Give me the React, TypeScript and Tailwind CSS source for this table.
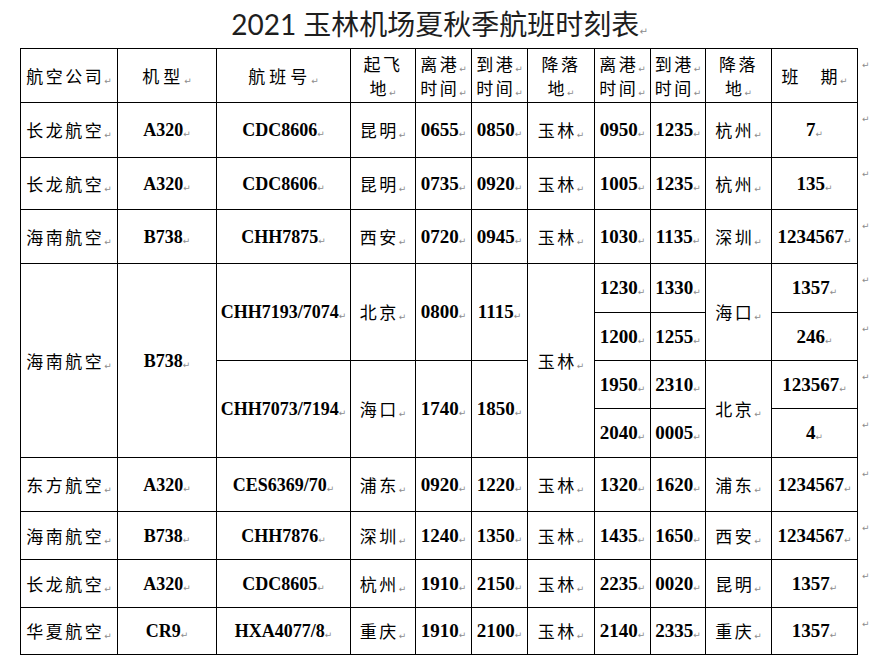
const ZH = "font-['Noto_Sans_CJK_SC',sans-serif] text-[17px] tracking-[2.5px] font-normal"
const NUM = "font-['Liberation_Serif','Noto_Sans_CJK_SC',serif] text-[18px] font-bold"
const DIGITS = "font-['Liberation_Serif','Noto_Sans_CJK_SC',serif] text-[19px] font-bold"

const zhCols = [0, 3, 6, 9]

const topRows = [
  ['长龙航空', 'A320', 'CDC8606', '昆明', '0655', '0850', '玉林', '0950', '1235', '杭州', '7'],
  ['长龙航空', 'A320', 'CDC8606', '昆明', '0735', '0920', '玉林', '1005', '1235', '杭州', '135'],
  ['海南航空', 'B738', 'CHH7875', '西安', '0720', '0945', '玉林', '1030', '1135', '深圳', '1234567'],
]
const topHeights = ['h-[55px]', 'h-[52px]', 'h-[54px]']

const bottomRows = [
  ['东方航空', 'A320', 'CES6369/70', '浦东', '0920', '1220', '玉林', '1320', '1620', '浦东', '1234567'],
  ['海南航空', 'B738', 'CHH7876', '深圳', '1240', '1350', '玉林', '1435', '1650', '西安', '1234567'],
  ['长龙航空', 'A320', 'CDC8605', '杭州', '1910', '2150', '玉林', '2235', '0020', '昆明', '1357'],
  ['华夏航空', 'CR9', 'HXA4077/8', '重庆', '1910', '2100', '玉林', '2140', '2335', '重庆', '1357'],
]
const bottomHeights = ['h-[54px]', 'h-[48px]', 'h-[48px]', 'h-[47px]']

const widths = [97, 99, 134, 65, 56, 56, 67, 56, 55, 66, 86, 22]

function Mark() {
  return (
    <span className="font-['DejaVu_Sans',sans-serif] text-[9px] leading-none font-normal tracking-normal text-[#8c8c8c] align-[-1px]">
      ↵
    </span>
  )
}

function Cell({ v, zh, rowSpan, extra = '' }: { v: string; zh?: boolean; rowSpan?: number; extra?: string }) {
  const font = zh ? ZH : /^\d+$/.test(v) ? DIGITS : NUM
  return (
    <td
      rowSpan={rowSpan}
      className={`border border-black p-0 text-center align-middle whitespace-nowrap leading-[20px] ${font} ${extra}`}
    >
      {v}
      <Mark />
    </td>
  )
}

function EndMark() {
  return (
    <td className="border-0 p-0 pl-[4px] pt-[6px] align-top text-left leading-[12px]">
      <Mark />
    </td>
  )
}

function Head2({ a, b, markA }: { a: string; b: string; markA?: boolean }) {
  return (
    <td className={`border border-black p-0 text-center align-middle ${ZH}`}>
      <div className="h-[25px] leading-[25px]">
        {a}
        {markA && <Mark />}
      </div>
      <div className="h-[24px] leading-[24px]">
        {b}
        <Mark />
      </div>
    </td>
  )
}

function Row({ r }: { r: string[] }) {
  return (
    <>
      {r.map((v, i) => (
        <Cell key={i} v={v} zh={zhCols.includes(i)} />
      ))}
    </>
  )
}

export default function App() {
  return (
    <div className="w-[879px] h-[667px] bg-white text-black overflow-hidden">
      <div className="h-[48px] flex items-center justify-center">
        <h1 className="font-['Lato','Noto_Sans_CJK_SC',sans-serif] text-[28px] font-normal text-[#1e1e1e] leading-none">
          2021 玉林机场夏秋季航班时刻表
          <span className="font-['DejaVu_Sans',sans-serif] text-[10px] text-[#8c8c8c]">↵</span>
        </h1>
      </div>

      <table className="ml-[20px] w-[859px] table-fixed border-collapse">
        <colgroup>
          {widths.map((w, i) => (
            <col key={i} style={{ width: w }} />
          ))}
        </colgroup>
        <tbody>
          <tr className="h-[54px]">
            <Cell v="航空公司" zh />
            <Cell v="机型" zh extra="tracking-[4px]" />
            <Cell v="航班号" zh extra="tracking-[4px]" />
            <Head2 a="起飞" b="地" />
            <Head2 a="离港" b="时间" markA />
            <Head2 a="到港" b="时间" markA />
            <Head2 a="降落" b="地" />
            <Head2 a="离港" b="时间" markA />
            <Head2 a="到港" b="时间" markA />
            <Head2 a="降落" b="地" />
            <Cell v="班　期" zh extra="tracking-[1px]" />
            <EndMark />
          </tr>

          {topRows.map((r, i) => (
            <tr key={i} className={topHeights[i]}>
              <Row r={r} />
              <EndMark />
            </tr>
          ))}

          <tr className="h-[49px]">
            <Cell v="海南航空" zh rowSpan={4} />
            <Cell v="B738" rowSpan={4} />
            <Cell v="CHH7193/7074" rowSpan={2} />
            <Cell v="北京" zh rowSpan={2} />
            <Cell v="0800" rowSpan={2} />
            <Cell v="1115" rowSpan={2} />
            <Cell v="玉林" zh rowSpan={4} />
            <Cell v="1230" />
            <Cell v="1330" />
            <Cell v="海口" zh rowSpan={2} />
            <Cell v="1357" />
            <EndMark />
          </tr>
          <tr className="h-[48px]">
            <Cell v="1200" />
            <Cell v="1255" />
            <Cell v="246" />
            <EndMark />
          </tr>
          <tr className="h-[48px]">
            <Cell v="CHH7073/7194" rowSpan={2} />
            <Cell v="海口" zh rowSpan={2} />
            <Cell v="1740" rowSpan={2} />
            <Cell v="1850" rowSpan={2} />
            <Cell v="1950" />
            <Cell v="2310" />
            <Cell v="北京" zh rowSpan={2} />
            <Cell v="123567" />
            <EndMark />
          </tr>
          <tr className="h-[49px]">
            <Cell v="2040" />
            <Cell v="0005" />
            <Cell v="4" />
            <EndMark />
          </tr>

          {bottomRows.map((r, i) => (
            <tr key={i} className={bottomHeights[i]}>
              <Row r={r} />
              <EndMark />
            </tr>
          ))}
        </tbody>
      </table>
    </div>
  )
}
